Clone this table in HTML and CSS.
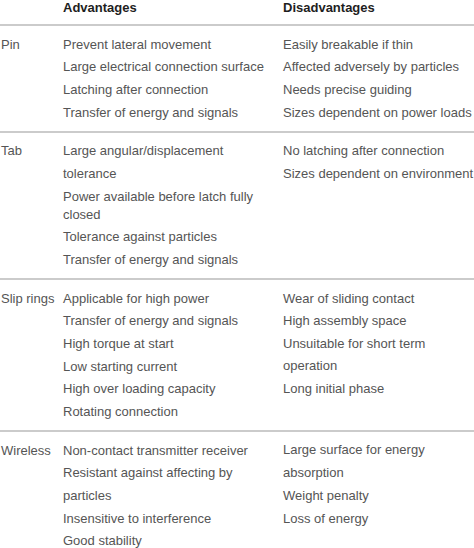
FILE: index.html
```html
<!DOCTYPE html>
<html lang="en">
<head>
<meta charset="utf-8">
<title>Connector comparison</title>
<link rel="stylesheet" href="styles.css">
</head>
<body>
<div class="table">
  <div class="row head">
    <div class="cell label"></div>
    <div class="cell">Advantages</div>
    <div class="cell">Disadvantages</div>
  </div>

  <div class="row">
    <div class="cell label"><div class="item">Pin</div></div>
    <div class="cell">
      <div class="item">Prevent lateral movement</div>
      <div class="item">Large electrical connection surface</div>
      <div class="item">Latching after connection</div>
      <div class="item">Transfer of energy and signals</div>
    </div>
    <div class="cell">
      <div class="item">Easily breakable if thin</div>
      <div class="item">Affected adversely by particles</div>
      <div class="item">Needs precise guiding</div>
      <div class="item">Sizes dependent on power loads</div>
    </div>
  </div>

  <div class="row">
    <div class="cell label"><div class="item">Tab</div></div>
    <div class="cell">
      <div class="item loose">Large angular/displacement<br>tolerance</div>
      <div class="item">Power available before latch fully<br>closed</div>
      <div class="item">Tolerance against particles</div>
      <div class="item">Transfer of energy and signals</div>
    </div>
    <div class="cell">
      <div class="item">No latching after connection</div>
      <div class="item">Sizes dependent on environment</div>
    </div>
  </div>

  <div class="row">
    <div class="cell label"><div class="item">Slip rings</div></div>
    <div class="cell">
      <div class="item">Applicable for high power</div>
      <div class="item">Transfer of energy and signals</div>
      <div class="item">High torque at start</div>
      <div class="item">Low starting current</div>
      <div class="item">High over loading capacity</div>
      <div class="item">Rotating connection</div>
    </div>
    <div class="cell">
      <div class="item">Wear of sliding contact</div>
      <div class="item">High assembly space</div>
      <div class="item loose">Unsuitable for short term<br>operation</div>
      <div class="item">Long initial phase</div>
    </div>
  </div>

  <div class="row last">
    <div class="cell label"><div class="item">Wireless</div></div>
    <div class="cell">
      <div class="item">Non-contact transmitter receiver</div>
      <div class="item loose">Resistant against affecting by<br>particles</div>
      <div class="item">Insensitive to interference</div>
      <div class="item">Good stability</div>
    </div>
    <div class="cell">
      <div class="item loose">Large surface for energy<br>absorption</div>
      <div class="item">Weight penalty</div>
      <div class="item">Loss of energy</div>
    </div>
  </div>
</div>
</body>
</html>
```

FILE: styles.css
```css
html, body {
  margin: 0;
  padding: 0;
  background: #ffffff;
}

body {
  width: 474px;
  height: 548px;
  overflow: hidden;
  font-family: "Liberation Sans", Arial, Helvetica, sans-serif;
  font-size: 13px;
  color: #555555;
}

.table {
  display: flex;
  flex-direction: column;
}

.row {
  display: grid;
  grid-template-columns: 63px 220px 191px;
  padding: 7.5px 0 6.5px;
  border-bottom: 2px solid #cbcbcb;
}

.row.last {
  border-bottom: none;
}

.row.head {
  padding: 1px 0 9px;
  font-weight: bold;
  color: #1e1e1e;
  line-height: 14px;
}

.cell {
  white-space: nowrap;
}

.label {
  padding-left: 1px;
}

.item {
  line-height: 18px;
  padding: 2.33px 0;
}

.item.loose {
  line-height: 22.67px;
  padding: 0;
}
```
